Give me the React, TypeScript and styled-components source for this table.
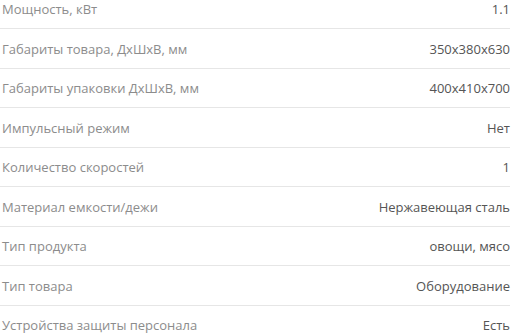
import * as React from "react";
import styled, {createGlobalStyle} from "styled-components";

const GlobalStyle = createGlobalStyle`
  html, body {
    margin: 0;
    padding: 0;
    background: #fff;
    overflow: hidden;
  }
`

const specs: [string, string][] = [
    ["Мощность, кВт", "1.1"],
    ["Габариты товара, ДхШхВ, мм", "350x380x630"],
    ["Габариты упаковки ДхШхВ, мм", "400x410x700"],
    ["Импульсный режим", "Нет"],
    ["Количество скоростей", "1"],
    ["Материал емкости/дежи", "Нержавеющая сталь"],
    ["Тип продукта", "овощи, мясо"],
    ["Тип товара", "Оборудование"],
    ["Устройства защиты персонала", "Есть"],
];

const List = styled.dl`
  width: 510px;
  margin: -10.5px 0 0;
  padding: 0;
  font-family: "Open Sans", "Noto Sans", sans-serif;
  font-size: 13px;
`

const Row = styled.div`
  display: flex;
  justify-content: space-between;
  align-items: center;
  padding: 9.5px 0 9px 2px;
  line-height: 20px;
  border-bottom: 1px solid #e6e6e6;
`

const Label = styled.dt`
  margin: 0;
  color: #8c8c8c;
`

const Value = styled.dd`
  margin: 0;
  color: #555;
`

const App = () => (
    <>
        <GlobalStyle/>
        <List>
            {specs.map(([label, value], i) => (
                <Row key={`spec${i}`}>
                    <Label>{label}</Label>
                    <Value>{value}</Value>
                </Row>
            ))}
        </List>
    </>
);

export default App;
